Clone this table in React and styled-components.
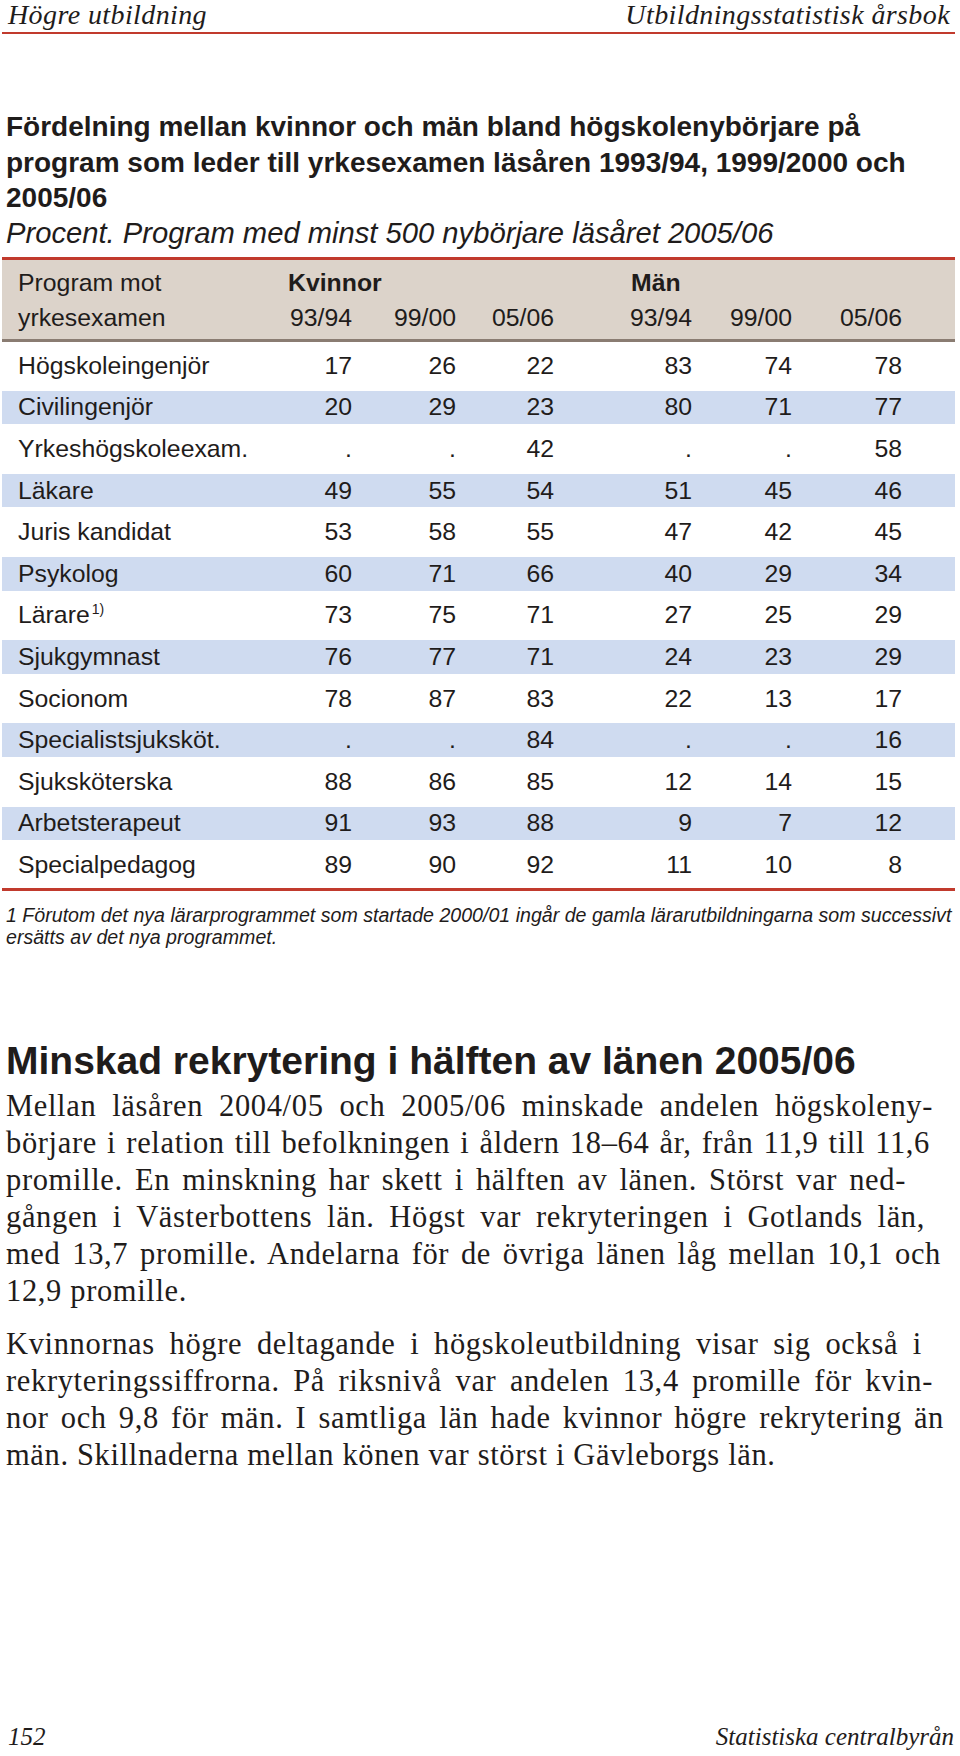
import React from 'react';
import styled, { createGlobalStyle } from 'styled-components';

const RED = '#c13a2d';
const COLS = '286px 64px 104px 98px 138px 100px 110px';

const GlobalStyle = createGlobalStyle`
  html, body {
    margin: 0;
    padding: 0;
    background: #ffffff;
  }
  body {
    font-family: 'Liberation Sans', Arial, sans-serif;
    color: #1f1c1b;
  }
`;

const Page = styled.div`
  width: 960px;
  min-height: 1756px;
  box-sizing: border-box;
  padding: 0 5px 0 2px;
  display: flex;
  flex-direction: column;
`;

const RunningHead = styled.header`
  display: flex;
  justify-content: space-between;
  align-items: flex-start;
  height: 32px;
  padding: 0 5px 0 6px;
  border-bottom: 2px solid ${RED};
  font-family: 'Liberation Serif', 'Times New Roman', serif;
  font-style: italic;
  font-size: 28px;
  line-height: 30px;
  letter-spacing: 0.4px;
`;

const Title = styled.h1`
  margin: 75px 0 0;
  padding-left: 4px;
  font-size: 28px;
  line-height: 35.5px;
  font-weight: 700;
`;

const Subtitle = styled.p`
  margin: 0;
  padding-left: 4px;
  font-size: 29.2px;
  line-height: 35.5px;
  font-style: italic;
`;

const Table = styled.section`
  margin-top: 6px;
  border-top: 3px solid ${RED};
  border-bottom: 3px solid ${RED};
  font-size: 24.8px;
`;

const Head = styled.div`
  display: grid;
  grid-template-columns: ${COLS};
  padding: 4.5px 0;
  line-height: 35px;
  background: #dcd3ca;
  border-bottom: 3px solid #8a7c72;
`;

const Group = styled.div`
  grid-column: ${(p) => p.$col} / span 3;
  font-weight: 700;
  padding-left: ${(p) => p.$indent || 0}px;
`;

const Label = styled.div`
  padding-left: 16px;
  white-space: nowrap;
`;

const Num = styled.div`
  text-align: right;
`;

const Body = styled.div`
  padding: 3px 0 2px;
`;

const Row = styled.div`
  display: grid;
  grid-template-columns: ${COLS};
  align-items: center;
  height: 41.6px;
  box-sizing: border-box;
  padding: 4px 0;
  background: ${(p) => (p.$shaded ? '#cfdbf0' : 'transparent')};
  background-clip: content-box;
`;

const Sup = styled.sup`
  font-size: 14px;
  vertical-align: 9px;
  line-height: 0;
  margin-left: 2px;
`;

const Footnote = styled.p`
  margin: 13px 0 0;
  padding-left: 4px;
  font-size: 19.6px;
  line-height: 22.5px;
  font-style: italic;
`;

const Heading = styled.h2`
  margin: 90px 0 0;
  padding-left: 4px;
  font-size: 39px;
  line-height: 44px;
  font-weight: 700;
`;

const Paragraph = styled.div`
  margin-top: ${(p) => p.$gap}px;
  padding-left: 4px;
  font-family: 'Liberation Serif', 'Times New Roman', serif;
  font-size: 30.5px;
  line-height: 37px;
  letter-spacing: 0.65px;
`;

const Line = styled.span`
  display: block;
  width: ${(p) => (p.$w ? `${p.$w}px` : 'auto')};
  text-align: justify;
  text-align-last: ${(p) => (p.$w ? 'justify' : 'left')};
`;

const Foot = styled.footer`
  margin-top: auto;
  display: flex;
  justify-content: space-between;
  padding: 0 1px 4px 6px;
  font-family: 'Liberation Serif', 'Times New Roman', serif;
  font-style: italic;
  font-size: 25px;
  line-height: 30px;
`;

const rows = [
  ['Högskoleingenjör', '17', '26', '22', '83', '74', '78'],
  ['Civilingenjör', '20', '29', '23', '80', '71', '77'],
  ['Yrkeshögskoleexam.', '.', '.', '42', '.', '.', '58'],
  ['Läkare', '49', '55', '54', '51', '45', '46'],
  ['Juris kandidat', '53', '58', '55', '47', '42', '45'],
  ['Psykolog', '60', '71', '66', '40', '29', '34'],
  ['Lärare', '73', '75', '71', '27', '25', '29'],
  ['Sjukgymnast', '76', '77', '71', '24', '23', '29'],
  ['Socionom', '78', '87', '83', '22', '13', '17'],
  ['Specialistsjuksköt.', '.', '.', '84', '.', '.', '16'],
  ['Sjuksköterska', '88', '86', '85', '12', '14', '15'],
  ['Arbetsterapeut', '91', '93', '88', '9', '7', '12'],
  ['Specialpedagog', '89', '90', '92', '11', '10', '8'],
];

const years = ['93/94', '99/00', '05/06', '93/94', '99/00', '05/06'];

const para1 = [
  ['Mellan läsåren 2004/05 och 2005/06 minskade andelen högskoleny-', 927],
  ['börjare i relation till befolkningen i åldern 18–64 år, från 11,9 till 11,6', 924],
  ['promille. En minskning har skett i hälften av länen. Störst var ned-', 900],
  ['gången i Västerbottens län. Högst var rekryteringen i Gotlands län,', 919],
  ['med 13,7 promille. Andelarna för de övriga länen låg mellan 10,1 och', 935],
  ['12,9 promille.', 0],
];

const para2 = [
  ['Kvinnornas högre deltagande i högskoleutbildning visar sig också i', 916],
  ['rekryteringssiffrorna. På riksnivå var andelen 13,4 promille för kvin-', 927],
  ['nor och 9,8 för män. I samtliga län hade kvinnor högre rekrytering än', 938],
  ['män. Skillnaderna mellan könen var störst i Gävleborgs län.', 0],
];

const Text = ({ lines, gap }) => (
  <Paragraph $gap={gap}>
    {lines.map(([t, w]) => (
      <Line key={t} $w={w}>
        {t}
      </Line>
    ))}
  </Paragraph>
);

export default function App() {
  return (
    <Page>
      <GlobalStyle />
      <RunningHead>
        <span>Högre utbildning</span>
        <span>Utbildningsstatistisk årsbok</span>
      </RunningHead>

      <Title>
        Fördelning mellan kvinnor och män bland högskolenybörjare på
        <br />
        program som leder till yrkesexamen läsåren 1993/94, 1999/2000 och
        <br />
        2005/06
      </Title>
      <Subtitle>Procent. Program med minst 500 nybörjare läsåret 2005/06</Subtitle>

      <Table>
        <Head>
          <Label>Program mot</Label>
          <Group $col={2}>Kvinnor</Group>
          <Group $col={5} $indent={77}>Män</Group>
          <Label>yrkesexamen</Label>
          {years.map((y, i) => (
            <Num key={i}>{y}</Num>
          ))}
        </Head>
        <Body>
          {rows.map(([name, ...vals], i) => (
            <Row key={name} $shaded={i % 2 === 1}>
              <Label>
                {name}
                {name === 'Lärare' && <Sup>1)</Sup>}
              </Label>
              {vals.map((v, j) => (
                <Num key={j}>{v}</Num>
              ))}
            </Row>
          ))}
        </Body>
      </Table>

      <Footnote>
        1 Förutom det nya lärarprogrammet som startade 2000/01 ingår de gamla lärarutbildningarna som successivt
        <br />
        ersätts av det nya programmet.
      </Footnote>

      <Heading>Minskad rekrytering i hälften av länen 2005/06</Heading>
      <Text lines={para1} gap={5} />
      <Text lines={para2} gap={16} />

      <Foot>
        <span>152</span>
        <span>Statistiska centralbyrån</span>
      </Foot>
    </Page>
  );
}
